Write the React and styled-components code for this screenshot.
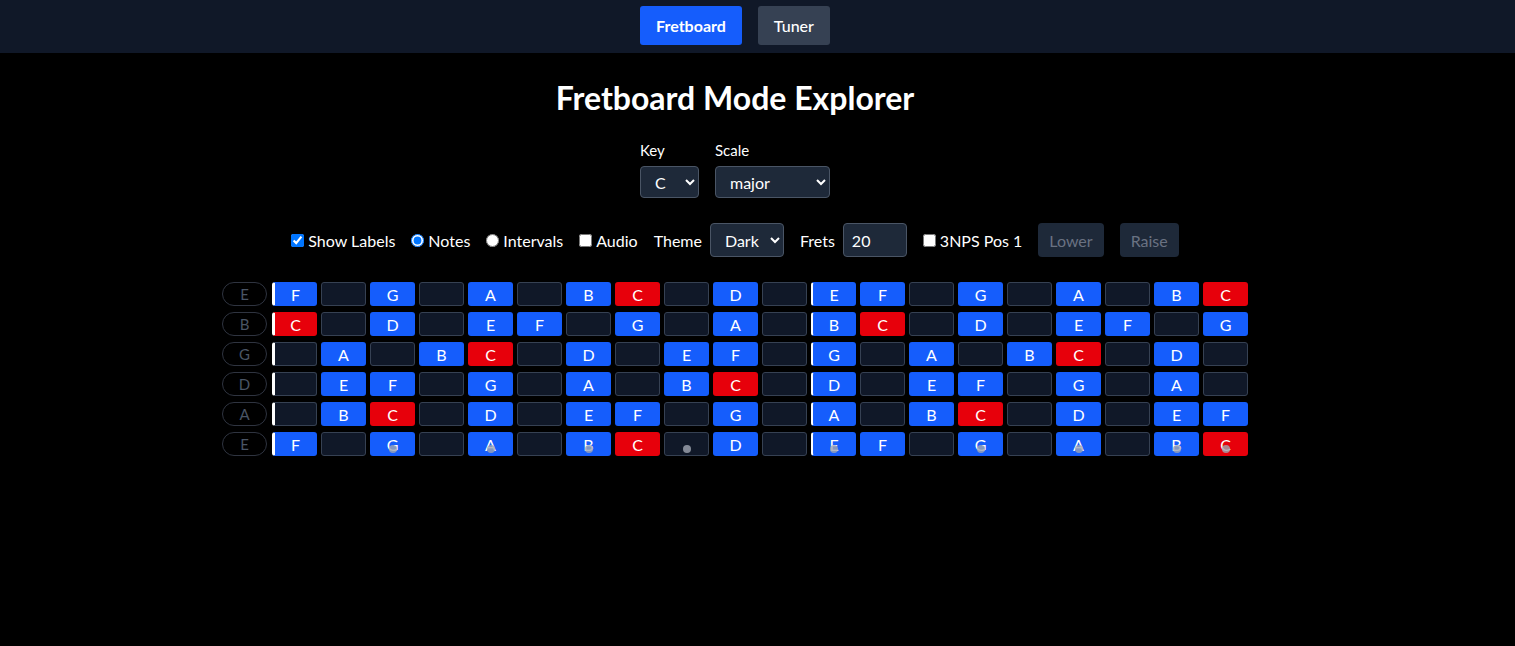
import React from 'react'
import styled, { createGlobalStyle } from 'styled-components'

const NOTES = ['C', 'C#', 'D', 'D#', 'E', 'F', 'F#', 'G', 'G#', 'A', 'A#', 'B']
const SCALE = ['C', 'D', 'E', 'F', 'G', 'A', 'B']
const STRINGS = ['E', 'B', 'G', 'D', 'A', 'E']
const FRETS = 20
const MARKERS = [3, 5, 7, 9, 12, 15, 17, 19, 20]

function noteAt(open, fret) {
  return NOTES[(NOTES.indexOf(open) + fret) % 12]
}

function App() {
  const frets = Array.from({ length: FRETS }, (_, i) => i + 1)

  return (
    <>
      <Global />
      <Nav>
        <NavInner>
          <NavButton $active>Fretboard</NavButton>
          <NavButton>Tuner</NavButton>
        </NavInner>
      </Nav>

      <Main>
        <Title>Fretboard Mode Explorer</Title>

        <Pickers>
          <Field>
            <span>Key</span>
            <Select defaultValue="C" $w={59}>
              {NOTES.map(n => <option key={n}>{n}</option>)}
            </Select>
          </Field>
          <Field>
            <span>Scale</span>
            <Select defaultValue="major" $w={115}>
              <option>major</option>
              <option>minor</option>
              <option>dorian</option>
            </Select>
          </Field>
        </Pickers>

        <Controls>
          <Check>
            <input type="checkbox" defaultChecked />
            Show Labels
          </Check>
          <Check>
            <input type="radio" name="mode" defaultChecked />
            Notes
          </Check>
          <Check>
            <input type="radio" name="mode" />
            Intervals
          </Check>
          <Check>
            <input type="checkbox" />
            Audio
          </Check>
          <Inline>
            Theme
            <Select defaultValue="Dark" $w={74} $h={34}>
              <option>Dark</option>
              <option>Light</option>
            </Select>
          </Inline>
          <Inline>
            Frets
            <NumberInput type="text" defaultValue="20" />
          </Inline>
          <Check>
            <input type="checkbox" />
            3NPS Pos 1
          </Check>
          <Inline>
            <GhostButton disabled>Lower</GhostButton>
            <GhostButton disabled>Raise</GhostButton>
          </Inline>
        </Controls>

        <Board>
          {STRINGS.map((open, s) => (
            <StringRow key={s}>
              <OpenLabel>{open}</OpenLabel>
              {frets.map(f => {
                const note = noteAt(open, f)
                const inScale = SCALE.includes(note)
                const kind = note === 'C' ? 'root' : inScale ? 'scale' : 'off'
                return (
                  <Cell key={f} $kind={kind} $nut={f === 1 ? 3 : f === 12 ? 2 : 0}>
                    {inScale ? note : ''}
                    {s === STRINGS.length - 1 && MARKERS.includes(f) && <Dot />}
                  </Cell>
                )
              })}
            </StringRow>
          ))}
        </Board>
      </Main>
    </>
  )
}

export default App


const Global = createGlobalStyle`
    body{
        margin: 0;
        background: #000;
        color: #fff;
        font-family: "Segoe UI", Lato, "Noto Sans", sans-serif;
    }
`

const Nav = styled.nav`
    background: #101828;
    height: 53px;
    padding-right: 45px;
`

const NavInner = styled.div`
    display: flex;
    justify-content: center;
    gap: 16px;
    padding-top: 6px;
`

const NavButton = styled.button`
    height: 39px;
    padding: 0 16px;
    border: none;
    border-radius: 3px;
    font-family: inherit;
    font-size: 16px;
    font-weight: ${p => (p.$active ? 700 : 500)};
    color: #fff;
    background: ${p => (p.$active ? '#155dfc' : '#364153')};
    cursor: pointer;
`

const Main = styled.main`
    display: flex;
    flex-direction: column;
    align-items: center;
    padding-right: 45px;
`

const Title = styled.h1`
    margin: 27px 0 0;
    font-size: 32px;
    line-height: 36px;
    font-weight: 700;
`

const Pickers = styled.div`
    display: flex;
    gap: 16px;
    margin-top: 24px;
`

const Field = styled.label`
    display: flex;
    flex-direction: column;
    gap: 6px;
    font-size: 15px;
    line-height: 20px;
`

const Select = styled.select`
    width: ${p => p.$w}px;
    height: ${p => p.$h || 32}px;
    padding: 0 6px 0 10px;
    background: #1e2939;
    color: #fff;
    border: 1px solid #4a5565;
    border-radius: 4px;
    font-family: inherit;
    font-size: 16px;
`

const Controls = styled.div`
    display: flex;
    align-items: center;
    gap: 16px;
    margin-top: 25px;
    height: 34px;
    font-size: 16px;
`

const Check = styled.label`
    display: flex;
    align-items: center;
    gap: 4px;

    input{
        margin: 0;
        width: 13px;
        height: 13px;
    }
`

const Inline = styled.div`
    display: flex;
    align-items: center;
    gap: 8px;

    >button + button{
        margin-left: 8px;
    }
`

const NumberInput = styled.input`
    width: 64px;
    height: 34px;
    box-sizing: border-box;
    padding: 0 8px;
    background: #1e2939;
    color: #fff;
    border: 1px solid #4a5565;
    border-radius: 4px;
    font-family: inherit;
    font-size: 16px;
`

const GhostButton = styled.button`
    height: 34px;
    padding: 0 11px;
    background: #1e2939;
    color: #6a7282;
    border: none;
    border-radius: 4px;
    font-family: inherit;
    font-size: 16px;
`

const Board = styled.div`
    display: flex;
    flex-direction: column;
    gap: 6px;
    margin-top: 25px;
`

const StringRow = styled.div`
    display: flex;
    gap: 4px;
`

const OpenLabel = styled.div`
    width: 45px;
    height: 24px;
    box-sizing: border-box;
    margin-right: 1px;
    display: flex;
    align-items: center;
    justify-content: center;
    border: 1px solid #2f3440;
    border-radius: 12px;
    color: #4a5565;
    font-size: 15px;
`

const Cell = styled.div`
    position: relative;
    width: 45px;
    height: 24px;
    box-sizing: border-box;
    display: flex;
    align-items: center;
    justify-content: center;
    border-radius: 3px;
    font-size: 16px;
    color: #fff;
    background: ${p => (p.$kind === 'root' ? '#e7000b' : p.$kind === 'scale' ? '#155dfc' : '#101828')};
    border: 1px solid ${p => (p.$kind === 'off' ? '#364153' : 'transparent')};
    ${p => p.$nut && `border-left: ${p.$nut}px solid #fff;`}
`

const Dot = styled.span`
    position: absolute;
    left: 50%;
    top: 12px;
    width: 8px;
    height: 8px;
    margin-left: -4px;
    border-radius: 50%;
    background: rgba(160, 166, 178, 0.8);
`
